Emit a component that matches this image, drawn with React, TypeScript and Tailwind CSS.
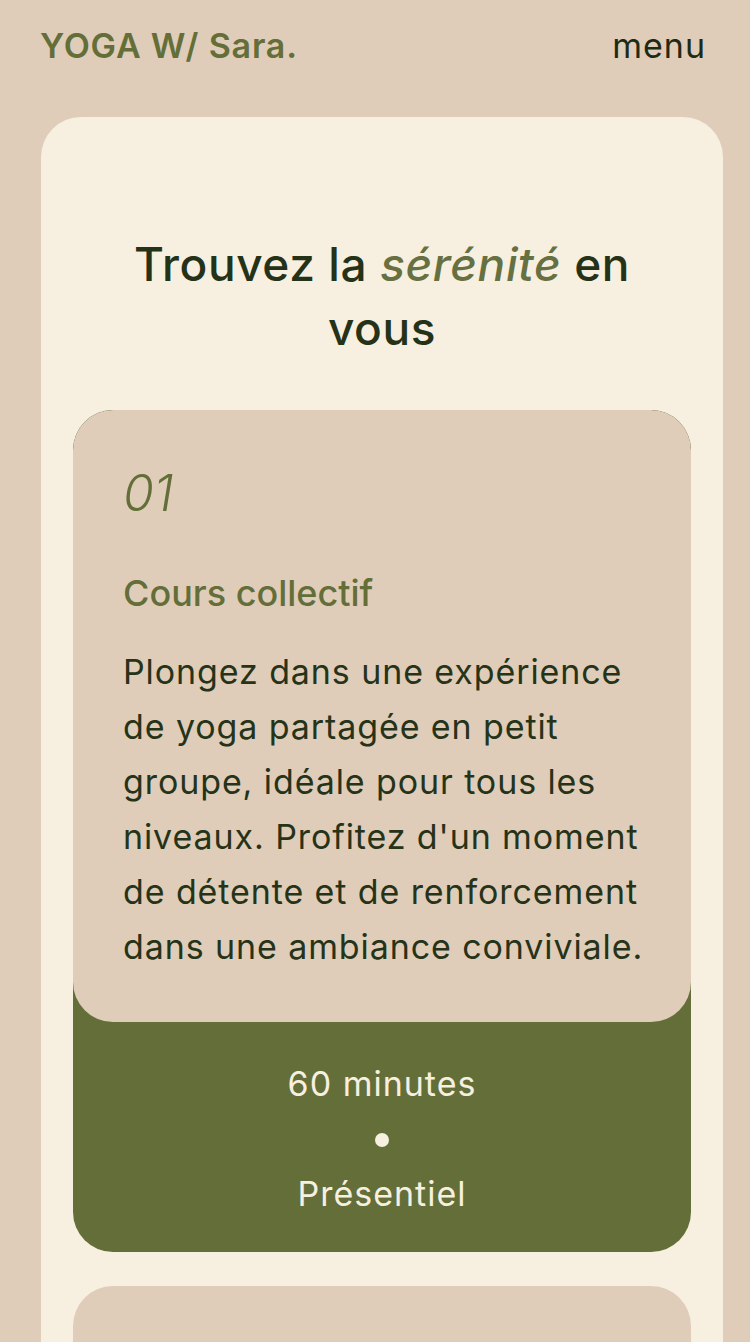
import React from "react";

export default function App() {
  const font = { fontFamily: "Inter, 'Noto Sans', sans-serif" };
  return (
    <div className="min-h-[1342px] bg-[#dfcdb9] overflow-hidden" style={font}>
      <header className="flex items-center justify-between pl-[40px] pr-[44px] h-[90px]">
        <div className="text-[34px] font-semibold tracking-[0.8px] text-[#636e39]">YOGA W/ Sara.</div>
        <div className="text-[34px] font-normal tracking-[1px] text-[#1f2a14]">menu</div>
      </header>
      <main className="mt-[27px] ml-[41px] w-[682px] bg-[#f7efe0] rounded-[40px] px-[32px] pt-[115px] pb-[40px]">
        <h1 className="text-center text-[46px] leading-[64px] font-medium tracking-[0.6px] text-[#243218]">
          Trouvez la <em className="italic text-[#667040]">sérénité</em> en
          <br />
          vous
        </h1>
        <div className="mt-[50px] rounded-[40px] bg-[#636e39] overflow-hidden">
          <div className="bg-[#dfcdb9] rounded-[40px] pl-[50px] pr-[20px] pt-[57px] pb-[48px]">
            <div className="text-[50px] italic font-light text-[#636e39] leading-[52px]">01</div>
            <h2 className="mt-[52px] text-[36px] font-medium tracking-[0px] text-[#636e39] leading-[44px]">Cours collectif</h2>
            <p className="mt-[29px] text-[34px] leading-[55px] tracking-[0.9px] text-[#263318] whitespace-nowrap">
              Plongez dans une expérience
              <br />
              de yoga partagée en petit
              <br />
              groupe, idéale pour tous les
              <br />
              niveaux. Profitez d'un moment
              <br />
              de détente et de renforcement
              <br />
              dans une ambiance conviviale.
            </p>
          </div>
          <div className="flex flex-col items-center pt-[38px] pb-[34px] text-[#f7efe0] text-[34px] tracking-[1px]">
            <div className="leading-[48px]">60 minutes</div>
            <div className="mt-[25px] mb-[23px] w-[14px] h-[14px] rounded-full bg-[#f7efe0]" />
            <div className="leading-[48px]">Présentiel</div>
          </div>
        </div>
        <div className="mt-[34px] rounded-[40px] bg-[#dfcdb9] h-[300px]" />
      </main>
    </div>
  );
}
